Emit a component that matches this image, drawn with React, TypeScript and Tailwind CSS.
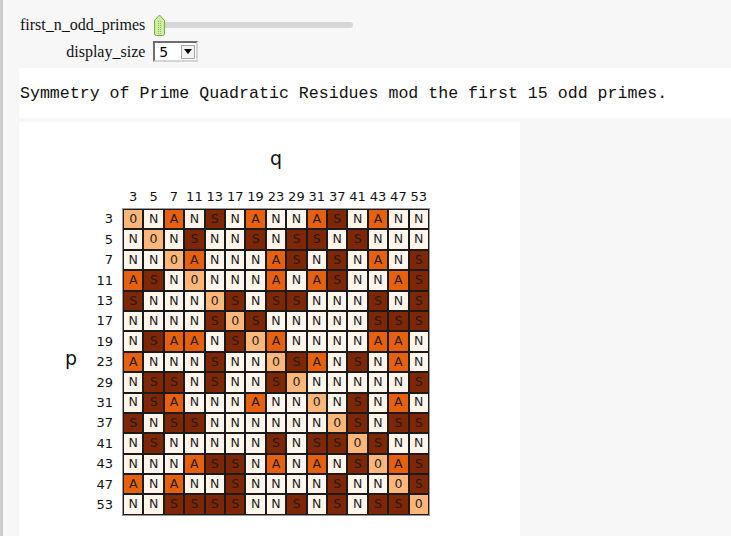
import React from "react";

const primes = [3, 5, 7, 11, 13, 17, 19, 23, 29, 31, 37, 41, 43, 47, 53];

const isResidue = (a: number, p: number) => {
  const n = ((a % p) + p) % p;
  for (let x = 1; x < p; x++) {
    if ((x * x) % p === n) return true;
  }
  return false;
};

// row p, column q
const symbolFor = (p: number, q: number) => {
  if (p === q) return "0";
  if (!isResidue(q, p)) return "N";
  return isResidue(p, q) ? "S" : "A";
};

const cellStyles: Record<string, string> = {
  "0": "bg-[#fdb67a]",
  N: "bg-[#fff5eb]",
  A: "bg-[#e6600e]",
  S: "bg-[#7f2704]",
};

const SliderThumb = () => (
  <svg width="13" height="23" viewBox="0 0 13 23" className="absolute left-0 top-0">
    <path
      d="M1.5 6.5 L6.5 1 L11.5 6.5 L11.5 19.5 Q11.5 21.5 9.5 21.5 L3.5 21.5 Q1.5 21.5 1.5 19.5 Z"
      fill="#cdeea0"
      stroke="#76b23a"
      strokeWidth="1"
    />
    {[7, 9, 11, 13, 15, 17, 19].map((y) => (
      <g key={y}>
        <rect x="5" y={y} width="1" height="1" fill="#8cc054" />
        <rect x="7" y={y} width="1" height="1" fill="#8cc054" />
      </g>
    ))}
  </svg>
);

const App: React.FC = () => {
  return (
    <div className="min-h-screen w-[731px] bg-[#f7f7f7] border-l-[3px] border-[#cbcbcb] overflow-hidden">
      {/* Controls */}
      <div className="pl-[17px] pt-[14px] grid grid-cols-[auto_auto] justify-start gap-x-[8px] gap-y-[5px] font-['Liberation_Serif',serif] text-[16px] text-[#111]">
        <div className="h-[22px] flex items-center justify-end">first_n_odd_primes</div>
        <div className="relative h-[22px] w-[200px] flex items-center">
          <div className="ml-[10px] w-[190px] h-[6px] rounded-full bg-[#d6d6d6]" />
          <SliderThumb />
        </div>

        <div className="h-[21px] flex items-center justify-end">display_size</div>
        <div className="w-[45px] h-[21px] bg-white border-2 border-t-[#6e6e6e] border-l-[#6e6e6e] border-b-[#d4d4d4] border-r-[#d4d4d4] flex items-center justify-between">
          <span className="pl-[4px] font-['DejaVu_Sans',sans-serif] text-[14px] leading-none text-black">5</span>
          <span className="mr-[1px] w-[14px] h-[14px] bg-[#f2f2f2] border border-[#a8a8a8] flex items-center justify-center">
            <svg width="8" height="5" viewBox="0 0 8 5">
              <path d="M0 0 L8 0 L4 5 Z" fill="#000" />
            </svg>
          </span>
        </div>
      </div>

      {/* Text output */}
      <div className="ml-[16px] mt-[6px] h-[50px] bg-white flex items-center pl-[1px] pt-[2px] font-['Liberation_Mono',monospace] text-[16.6px] text-[#111] whitespace-pre">
        Symmetry of Prime Quadratic Residues mod the first 15 odd primes.
      </div>

      {/* Plot */}
      <div className="ml-[16px] mt-[4px] w-[501px] h-[420px] bg-white pt-[24px] pl-[42px] font-['DejaVu_Sans',sans-serif] text-[#111]">
        <div className="ml-[61px] w-[308px] text-center text-[19px] leading-[24px]">q</div>

        <div className="ml-[61px] mt-[19px] mb-[3px] w-[308px] px-[1px] grid grid-cols-15 text-[13px] leading-[16px]">
          {primes.map((q) => (
            <div key={q} className="text-center">
              {q}
            </div>
          ))}
        </div>

        <div className="flex">
          <div className="w-[20px] flex items-center justify-center text-[19px] leading-[24px] pb-[8px]">p</div>
          <div className="w-[32px] pt-[1px] flex flex-col text-[13px]">
            {primes.map((p) => (
              <div key={p} className="h-[20.4px] flex items-center justify-end">
                {p}
              </div>
            ))}
          </div>
          <div className="ml-[9px] w-[308px] border border-[#9a9a9a] grid grid-cols-15">
            {primes.map((p) =>
              primes.map((q) => {
                const s = symbolFor(p, q);
                return (
                  <div
                    key={`${p}-${q}`}
                    className={`${cellStyles[s]} h-[20.4px] border border-[#1a1a1a] flex items-center justify-center text-[12.5px] text-[#1c1c1c] leading-none`}
                  >
                    {s}
                  </div>
                );
              })
            )}
          </div>
        </div>
      </div>
    </div>
  );
};

export default App;
